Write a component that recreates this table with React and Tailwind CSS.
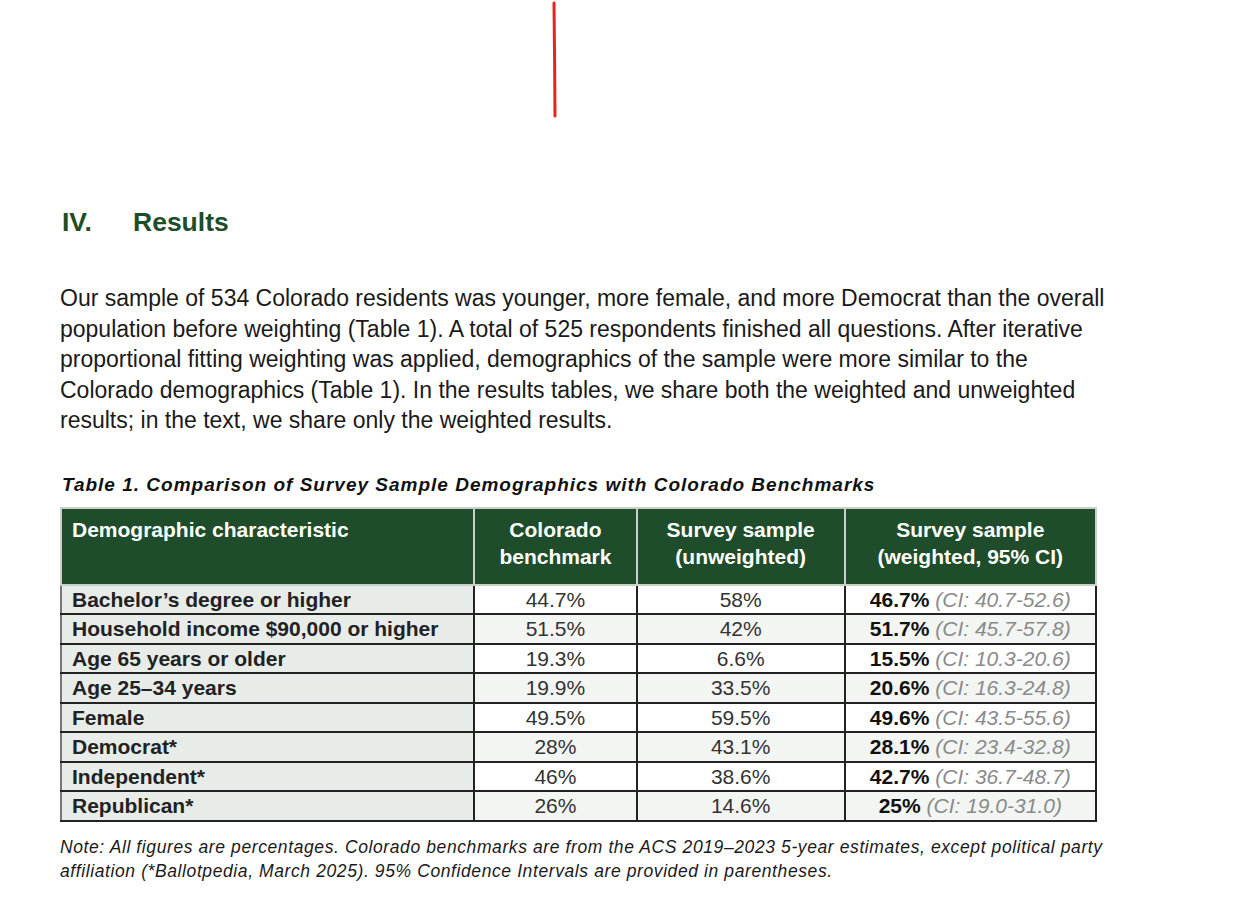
import React from "react";

const rows = [
  ["Bachelor’s degree or higher", "44.7%", "58%", "46.7%", "(CI: 40.7-52.6)"],
  ["Household income $90,000 or higher", "51.5%", "42%", "51.7%", "(CI: 45.7-57.8)"],
  ["Age 65 years or older", "19.3%", "6.6%", "15.5%", "(CI: 10.3-20.6)"],
  ["Age 25–34 years", "19.9%", "33.5%", "20.6%", "(CI: 16.3-24.8)"],
  ["Female", "49.5%", "59.5%", "49.6%", "(CI: 43.5-55.6)"],
  ["Democrat*", "28%", "43.1%", "28.1%", "(CI: 23.4-32.8)"],
  ["Independent*", "46%", "38.6%", "42.7%", "(CI: 36.7-48.7)"],
  ["Republican*", "26%", "14.6%", "25%", "(CI: 19.0-31.0)"],
];

export default function App() {
  return (
    <div
      className="min-h-screen bg-white px-[60px] text-[#111]"
      style={{ fontFamily: '"Liberation Sans", Arial, sans-serif' }}
    >
      {/* red pen mark */}
      <div className="h-[120px]">
        <svg width="1132" height="120" className="block">
          <path d="M494 3 L494.6 60 L495 116" stroke="#e8231f" strokeWidth="3" strokeLinecap="round" fill="none" />
        </svg>
      </div>

      <h2 className="mt-[86px] flex text-[26.5px] leading-[32px] font-bold text-[#1e4d2b]">
        <span className="w-[73px] pl-[2px]">IV.</span>
        <span>Results</span>
      </h2>

      <p className="mt-[45px] whitespace-nowrap text-[23px] leading-[30.5px] text-[#1a1a1a]">
        Our sample of 534 Colorado residents was younger, more female, and more Democrat than the overall
        <br />
        population before weighting (Table 1). A total of 525 respondents finished all questions. After iterative
        <br />
        proportional fitting weighting was applied, demographics of the sample were more similar to the
        <br />
        Colorado demographics (Table 1). In the results tables, we share both the weighted and unweighted
        <br />
        results; in the text, we share only the weighted results.
      </p>

      <div className="mt-[37px] pl-[2px] text-[19px] leading-[24px] font-bold italic tracking-[1px] text-[#111]">
        Table 1. Comparison of Survey Sample Demographics with Colorado Benchmarks
      </div>

      <table className="mt-[10px] w-[1037px] border-collapse text-[21px]">
        <colgroup>
          <col className="w-[414px]" />
          <col className="w-[163px]" />
          <col className="w-[208px]" />
          <col className="w-[252px]" />
        </colgroup>
        <thead>
          <tr className="h-[77px] bg-[#1f4d2b] text-white font-bold leading-[27px]">
            <th className="border-2 border-[#c9d0ca] px-[10px] pt-[7px] text-left align-top font-bold">
              Demographic characteristic
            </th>
            <th className="border-2 border-[#c9d0ca] pt-[7px] text-center align-top font-bold">
              Colorado
              <br />
              benchmark
            </th>
            <th className="border-2 border-[#c9d0ca] pt-[7px] text-center align-top font-bold">
              Survey sample
              <br />
              (unweighted)
            </th>
            <th className="border-2 border-[#c9d0ca] pt-[7px] text-center align-top font-bold">
              Survey sample
              <br />
              (weighted, 95% CI)
            </th>
          </tr>
        </thead>
        <tbody>
          {rows.map((r, i) => (
            <tr key={r[0]} className={"h-[29.5px] leading-[25px] " + (i % 2 ? "bg-[#f3f5f3]" : "bg-white")}>
              <td className="border-2 border-[#222] border-l-[#777] bg-[#e7ece8] px-[10px] font-bold text-[#222]">
                {r[0]}
              </td>
              <td className="border-2 border-[#222] text-center text-[#333]">{r[1]}</td>
              <td className="border-2 border-[#222] text-center text-[#333]">{r[2]}</td>
              <td className="border-2 border-[#222] text-center">
                <span className="font-bold text-[#111]">{r[3]}</span>{" "}
                <span className="italic text-[#8a8a8a]">{r[4]}</span>
              </td>
            </tr>
          ))}
        </tbody>
      </table>

      <p className="mt-[13px] whitespace-nowrap text-[17.5px] leading-[24px] italic tracking-[0.6px] text-[#1a1a1a]">
        Note: All figures are percentages. Colorado benchmarks are from the ACS 2019–2023 5-year estimates, except political party
        <br />
        affiliation (*Ballotpedia, March 2025). 95% Confidence Intervals are provided in parentheses.
      </p>
    </div>
  );
}
